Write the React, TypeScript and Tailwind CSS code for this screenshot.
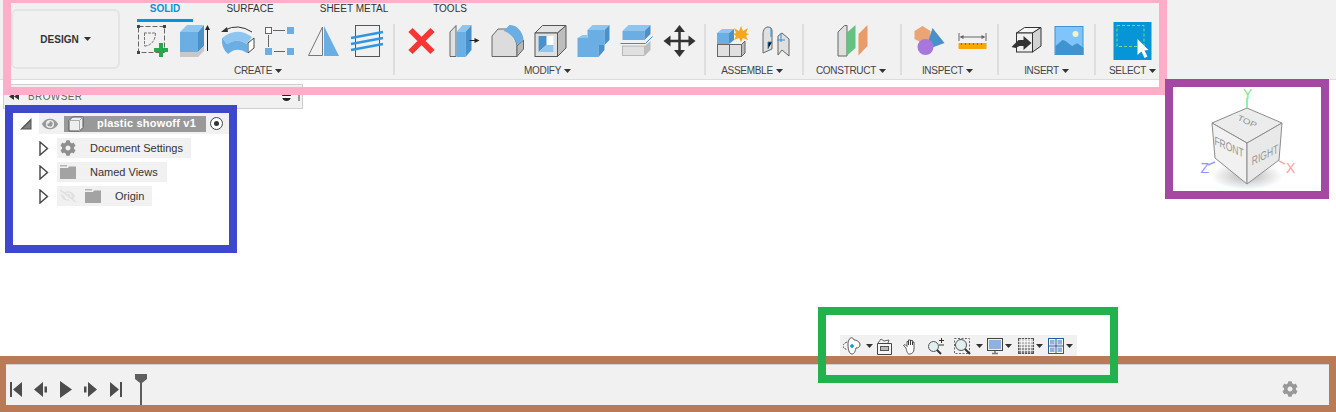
import type { ReactNode } from 'react'
import { FaCog, FaEye, FaEyeSlash } from 'react-icons/fa'

const BLUE = '#6aaee3'
const BLUE_DARK = '#4a91c9'
const BLUE_LIGHT = '#8fc6ef'

// toolbar icons are drawn in screen coords, x is the left edge of the 43px cell
function Cell({ x, children }: { x: number; children: ReactNode }) {
  return (
    <svg width={43} height={40} viewBox={`${x} 21 43 40`} className="shrink-0">
      {children}
    </svg>
  )
}

function Caret({ className = '' }: { className?: string }) {
  return (
    <svg width={7} height={4} viewBox="0 0 7 4" className={className}>
      <polygon points="0,0 7,0 3.5,4" fill="#333" />
    </svg>
  )
}

function Group({ label, className, labelClass = 'mr-[4px]', children }: { label: string; className: string; labelClass?: string; children: ReactNode }) {
  return (
    <div className={`flex flex-col items-center h-[51px] ${className}`}>
      <div className="flex h-[40px] -mt-[3px]">{children}</div>
      <div className={`flex items-center gap-[3px] mt-[4px] text-[10px] tracking-[-0.3px] leading-[12px] text-[#444] ${labelClass}`}>
        {label}
        <Caret />
      </div>
    </div>
  )
}

function Folder() {
  return (
    <svg width={16} height={14} viewBox="0 0 16 14">
      <path d="M0 0h7v1.500H0z" fill="#b5b5b5" />
      <path d="M0 3h8l1-1.500h7V14H0z" fill="#a3a3a3" />
    </svg>
  )
}

function Expand() {
  return (
    <svg width={10} height={15} viewBox="0 0 10 15" className="shrink-0">
      <path d="M1 1l7.500 6.500L1 14z" fill="#fff" stroke="#444" strokeWidth="1.400" />
    </svg>
  )
}

function Toolbar() {
  return (
    <div className="flex h-[80px] shrink-0 bg-[#f1f1f1] border-b border-[#dcdcdc]">
      <div className="w-[109px] h-[60px] mt-[9px] ml-[11px] mr-[7px] shrink-0 flex items-center justify-center gap-[5px] rounded-[6px] border-2 border-[#e4e4e4] text-[10px] font-bold text-[#333]">
        DESIGN
        <Caret />
      </div>
      <div className="flex flex-col">
        <div className="flex h-[24px] text-[10px] text-[#333]">
          <div className="w-[56px] ml-[10px] h-[22px] flex justify-center pt-[3px] border-b-[3px] border-[#0696d7] text-[#0696d7] font-bold leading-[12px]">SOLID</div>
          <div className="w-[114px] flex justify-center pt-[3px] leading-[12px]">SURFACE</div>
          <div className="w-[94px] flex justify-center pt-[3px] leading-[12px]">SHEET METAL</div>
          <div className="w-[98px] flex justify-center pt-[3px] leading-[12px]">TOOLS</div>
        </div>
        <div className="flex">
          <Group label="CREATE" className="w-[268px] border-r-2 border-[#dedede]">
            <Cell x={131}>
              <rect x="138.500" y="26.500" width="26" height="26" fill="none" stroke="#666" strokeDasharray="5 2" />
              <path d="M137 25h3v3h-3zM163 25h3v3h-3zM137 51h3v3h-3z" fill="#444" />
              <path d="M144 33h11M144.500 33v13M144.500 46c6 0 11-5 11-13" fill="none" stroke="#777" strokeDasharray="3 1" />
              <path d="M159 43h4v5h5v4h-5v5h-4v-5h-5v-4h5z" fill="#22a94a" />
            </Cell>
            <Cell x={174}>
              <polygon points="180,32 198,32 198,52 180,52" fill={BLUE} />
              <polygon points="198,32 204,25 204,46 198,52" fill={BLUE_DARK} />
              <polygon points="180,32 187,25 204,25 198,32" fill={BLUE_LIGHT} />
              <polygon points="180,52 198,52 204,46 204,51 198,57 180,57" fill="#c8c8c8" />
              <path d="M207.500 29v22" stroke="#222" />
              <polygon points="207.500,25 205,30 210,30" fill="#222" />
            </Cell>
            <Cell x={217}>
              <path d="M222 38Q237 26 252 37L247 44Q237 37 227 44Z" fill={BLUE_LIGHT} />
              <path d="M222 38L227 44Q237 37 247 44V53Q237 46 228 54Q221 48 222 38Z" fill={BLUE} />
              <polygon points="248,43 254,38 254,48 248,53" fill="#fff" stroke="#444" />
              <path d="M252 32Q238 23 225 30" fill="none" stroke="#333" />
              <polygon points="221,32 227,27 228,32" fill="#333" />
            </Cell>
            <Cell x={260}>
              <rect x="265.500" y="27.500" width="6" height="6" fill="#fff" stroke="#666" />
              <rect x="287" y="27" width="7" height="7" fill={BLUE} />
              <rect x="265" y="48" width="7" height="7" fill={BLUE} />
              <rect x="287" y="48" width="7" height="7" fill={BLUE} />
              <path d="M273 30.500h12M268.500 35v12M274 51.500h11" stroke="#666" />
            </Cell>
            <Cell x={303}>
              <polygon points="308.500,55.500 322.500,27 322.500,55.500" fill="none" stroke="#777" />
              <polygon points="324,26 339,56 324,56" fill={BLUE} />
            </Cell>
            <Cell x={346}>
              <rect x="355.500" y="25.500" width="24" height="31" fill="#f1f1f1" stroke="#555" />
              <path d="M351 38l32-6M351 44l32-6M351 50l32-6" stroke="#2f96e0" strokeWidth="2.500" />
            </Cell>
          </Group>
          <Group label="MODIFY" labelClass="mr-[6px]" className="w-[311px] pl-[2px] border-r-2 border-[#dedede]">
            <Cell x={399.500}>
              <path d="M410 30l22 22M432 30l-22 22" stroke="#f93535" strokeWidth="6" />
            </Cell>
            <Cell x={442.500}>
              <path d="M449.500 56.500V32l6-6.500v31z" fill="#e0e0e0" stroke="#666" />
              <rect x="456" y="32" width="9" height="25" fill={BLUE} />
              <polygon points="456,32 462,25 471,25 465,32" fill={BLUE_LIGHT} />
              <polygon points="465,32 471,25 471,50 465,57" fill={BLUE_DARK} />
              <path d="M469 40.500h6" stroke="#222" />
              <polygon points="479,40.500 474,38 474,43" fill="#222" />
            </Cell>
            <Cell x={485.500}>
              <path d="M491.500 56.500V36l6-7h9c5 4 9 10 10 17v10.500z" fill="#dcdcdc" stroke="#666" />
              <path d="M516.500 46l6.500-6v9l-6.500 7.500z" fill="#b8b8b8" stroke="#666" />
              <path d="M503 31l6-6c7 0 13 6 14 14l-6 6c-2-6-7-12-14-14z" fill={BLUE} />
            </Cell>
            <Cell x={528.500}>
              <polygon points="534.500,33 542,25.500 565.500,25.500 557,33" fill="#e4e4e4" stroke="#555" />
              <polygon points="557,33 565.500,25.500 565.500,48 557,56.500" fill="#bdbdbd" stroke="#555" />
              <rect x="534.500" y="33" width="22.500" height="23.500" fill="#e0e0e0" stroke="#555" />
              <rect x="538" y="36" width="15" height="16" fill="#fff" />
              <polygon points="538,36 546,36 546,45 538,52" fill={BLUE_DARK} />
              <polygon points="546,45 553,45 553,52 538,52" fill={BLUE_LIGHT} />
            </Cell>
            <Cell x={571.500}>
              <polygon points="577,38 587,38 587,30 604,30 604,45 598,45 598,57 577,57" fill={BLUE} />
              <polygon points="587,30 592,25 609,25 604,30" fill={BLUE_LIGHT} />
              <polygon points="577,38 582,35 587,35 587,38" fill={BLUE_LIGHT} />
              <polygon points="604,30 609,25 609,40 604,45" fill={BLUE_DARK} />
              <polygon points="598,45 604,45 604,50 598,57" fill={BLUE_DARK} />
            </Cell>
            <Cell x={614.500}>
              <rect x="622" y="31" width="22" height="9" fill={BLUE} />
              <polygon points="622,31 628,25 650,25 644,31" fill={BLUE_LIGHT} />
              <polygon points="644,31 650,25 650,34 644,40" fill={BLUE_DARK} />
              <path d="M620 43.500h25l7-7" fill="none" stroke="#2f8fd8" />
              <rect x="622" y="46" width="22" height="9.500" fill="#e0e0e0" stroke="#888" strokeWidth=".5" />
              <polygon points="644,46 650,41 650,50 644,56" fill="#bdbdbd" />
            </Cell>
            <Cell x={657.500}>
              <path d="M679 30v22M668 41h22" stroke="#333" strokeWidth="2.500" />
              <polygon points="679,25 673.500,32 684.500,32" fill="#333" />
              <polygon points="679,57 673.500,50 684.500,50" fill="#333" />
              <polygon points="663,41 670,35.500 670,46.500" fill="#333" />
              <polygon points="695,41 688,35.500 688,46.500" fill="#333" />
            </Cell>
          </Group>
          <Group label="ASSEMBLE" className="w-[98px] px-[5px] border-r-2 border-[#dedede]">
            <Cell x={711}>
              <rect x="717" y="33" width="12" height="11" fill={BLUE} />
              <polygon points="717,33 722,29 734,29 729,33" fill={BLUE_LIGHT} />
              <polygon points="729,33 734,29 734,40 729,44" fill={BLUE_DARK} />
              <rect x="717.500" y="44.500" width="12" height="12" fill="#e0e0e0" stroke="#666" />
              <rect x="729.500" y="44.500" width="12" height="12" fill="#e0e0e0" stroke="#666" />
              <polygon points="741.500,44.500 745,41 745,53 741.500,56.500" fill="#bbb" stroke="#666" />
              <polygon points="741,26 743,31 748,28 746,33 749,34 746,36 748,40 743,38 741,42 739,38 734,40 736,36 733,34 736,33 734,28 739,31" fill="#f6a81c" />
            </Cell>
            <Cell x={754}>
              <path d="M763 53V34c0-4 2-7 5-7s4 2 4 4v18z" fill="#e0e0e0" stroke="#666" />
              <path d="M778 55V36l4-3 7 6v17l-7-6z" fill="#e0e0e0" stroke="#666" />
              <path d="M771 28v9M772 42h-4v7M781 33v9M777 40h8" stroke="#2f8fd8" />
            </Cell>
          </Group>
          <Group label="CONSTRUCT" labelClass="mr-[2px]" className="w-[98px] border-r-2 border-[#dedede]">
            <Cell x={830.500}>
              <polygon points="837.500,32 844,25.500 846.500,25.500 846.500,56 837.500,56" fill="#e0e0e0" stroke="#666" />
              <polygon points="846,33 855,25 855,48 846,56" fill="#63c27f" />
              <polygon points="858,34 867,25 867,46 858,55.500" fill="#e89c69" />
            </Cell>
          </Group>
          <Group label="INSPECT" labelClass="mr-[6px]" className="w-[97px] pl-[2px] border-r-2 border-[#dedede]">
            <Cell x={907.500}>
              <polygon points="922,26 930,31 930,39 922,43 914,39 914,31" fill="#eba476" />
              <polygon points="932,28 944,43 925,50" fill={BLUE_DARK} />
              <circle cx="925" cy="47" r="8" fill="#a877de" />
            </Cell>
            <Cell x={950.500}>
              <path d="M958.500 33v8M985.500 33v8M961 37h22" stroke="#666" />
              <polygon points="959,37 963,35 963,39" fill="#666" />
              <polygon points="985,37 981,35 981,39" fill="#666" />
              <rect x="958" y="43" width="28" height="6" fill="#f6a800" />
              <path d="M961 43v2M965 43v2M969 43v2M973 43v2M977 43v2M981 43v2" stroke="#9a6a00" />
            </Cell>
          </Group>
          <Group label="INSERT" labelClass="mr-[2px]" className="w-[97px] pl-[2px] border-r-2 border-[#dedede]">
            <Cell x={1004.500}>
              <polygon points="1016,33 1024,27.500 1040.500,27.500 1032,33" fill="#f6f6f6" stroke="#333" />
              <polygon points="1032,33 1040.500,27.500 1040.500,46 1032,52" fill="#d4d4d4" stroke="#333" />
              <rect x="1016" y="33" width="16" height="19" fill="#f0f0f0" stroke="#333" />
              <polygon points="1011,47 1018,40 1023,40 1023,36 1031,43 1023,50 1023,46 1019,46 1015,48" fill="#333" />
            </Cell>
            <Cell x={1047.500}>
              <rect x="1054.500" y="26.500" width="28" height="28" fill="#80c4fb" stroke="#3f93cf" />
              <path d="M1055 46l7-6c3 0 6 4 10 6 3-2 4-3 6-2l5 4v7h-28z" fill="#3f93cf" />
              <circle cx="1075" cy="34" r="3" fill="#f7f3c8" />
            </Cell>
          </Group>
          <Group label="SELECT" labelClass="" className="w-[73px]">
            <Cell x={1111.500}>
              <rect x="1114" y="22" width="38" height="38" fill="#0696d7" />
              <rect x="1117.500" y="25.500" width="27" height="21" fill="none" stroke="#6ee07f" strokeDasharray="3 2" />
              <polygon points="1138,39 1138,55 1142,51.500 1145,58 1148,56.500 1145,50.500 1149,50" fill="#fff" />
            </Cell>
          </Group>
        </div>
      </div>
    </div>
  )
}

function BrowserTree() {
  return (
    <div className="absolute left-0 top-0 w-[304px] text-[11px] text-[#333]">
      <div className="ml-[3px] mt-[4px] w-[300px] h-[25px] flex items-center border border-[#cfcfcf] bg-[#f1f1f1] text-[#666] text-[10px]">
        <svg width={10} height={7} viewBox="0 0 10 7" className="ml-[5px]">
          <path d="M5 0v7L0 3.500zM10 0v7L5 3.500z" fill="#333" />
        </svg>
        <span className="ml-[9px] tracking-[0.4px]">BROWSER</span>
        <div className="ml-auto mr-[7px] w-[9px] h-[9px] rounded-full bg-[#222] flex items-center">
          <div className="w-full h-[2px] bg-white" />
        </div>
        <div className="mr-[2px] w-[2px] h-[9px] border-x border-[#999]" />
      </div>
      <div className="flex items-center ml-[20px] mt-[4px] h-[21px]">
        <svg width={12} height={12} viewBox="0 0 12 12" className="shrink-0">
          <path d="M0 11.500L11.500 0v11.500z" fill="#555" />
          <path d="M3 10.500l7.500-7.500v7.500z" fill="#fff" opacity=".25" />
        </svg>
        <div className="ml-[7px] w-[190px] h-full flex items-center bg-[#f1f1f1]">
          <FaEye className="ml-[3px] text-[#999] w-[16px] h-[16px]" />
          <div className="ml-[6px] w-[142px] h-[16px] flex items-center bg-[#999] text-white font-bold">
            <svg width={16} height={16} viewBox="0 0 16 16" className="ml-[4px] shrink-0">
              <path d="M1 4.500L4.500 1H15v10.500L11.500 15H1z" fill="#eee" stroke="#555" />
              <path d="M1 4.500h10.500V15M11.500 4.500L15 1" fill="none" stroke="#aaa" />
            </svg>
            <span className="ml-[13px] tracking-[0.2px] whitespace-nowrap">plastic showoff v1</span>
          </div>
          <div className="ml-[4px] w-[13px] h-[13px] rounded-full border border-[#444] bg-white flex items-center justify-center">
            <div className="w-[5px] h-[5px] rounded-full bg-[#333]" />
          </div>
        </div>
      </div>
      <div className="flex flex-col gap-[4px] mt-[4px] ml-[39px]">
        <div className="flex items-center gap-[8px] h-[20px]">
          <Expand />
          <div className="w-[134px] h-full flex items-center bg-[#f1f1f1]">
            <FaCog className="ml-[3px] w-[16px] h-[16px] text-[#8f8f8f]" />
            <span className="ml-[14px] whitespace-nowrap">Document Settings</span>
          </div>
        </div>
        <div className="flex items-center gap-[8px] h-[20px]">
          <Expand />
          <div className="w-[110px] h-full flex items-center bg-[#f1f1f1] pl-[3px]">
            <Folder />
            <span className="ml-[14px] whitespace-nowrap">Named Views</span>
          </div>
        </div>
        <div className="flex items-center gap-[8px] h-[20px]">
          <Expand />
          <div className="w-[95px] h-full flex items-center bg-[#f1f1f1] pl-[3px]">
            <FaEyeSlash className="w-[16px] h-[16px] text-[#e0e0e0]" />
            <div className="ml-[9px]"><Folder /></div>
            <span className="ml-[14px]">Origin</span>
          </div>
        </div>
      </div>
    </div>
  )
}

function ViewCube() {
  return (
    <svg width={120} height={112} viewBox="1195 85 120 112" className="absolute left-[1195px] top-[5px]">
      <defs>
        <radialGradient id="cubeShadow">
          <stop offset="0%" stopColor="#000" stopOpacity=".28" />
          <stop offset="100%" stopColor="#000" stopOpacity="0" />
        </radialGradient>
      </defs>
      <ellipse cx="1247" cy="176" rx="36" ry="14" fill="url(#cubeShadow)" />
      <polygon points="1247,108 1282,123 1247,143 1212,123" fill="#ececec" stroke="#8c8c8c" />
      <polygon points="1212,123 1247,143 1247,184 1215,158" fill="#f1f1f1" stroke="#8c8c8c" />
      <polygon points="1282,123 1247,143 1247,184 1279,160" fill="#e9e9e9" stroke="#8c8c8c" />
      <g fontFamily="Liberation Sans, Arial, sans-serif" fontSize="10" fill="#959595" textAnchor="middle">
        <text transform="translate(1246 124) rotate(24) scale(1 .8)">TOP</text>
        <text transform="translate(1229 151) skewY(24) scale(.85 1.2)">FRONT</text>
        <text transform="translate(1265 159) skewY(-26) scale(.85 1.2)">RIGHT</text>
      </g>
      <path d="M1247 98v10" stroke="#7be68c" strokeWidth="1.500" />
      <path d="M1215 162l-7 3" stroke="#9aa0ff" strokeWidth="1.500" />
      <path d="M1279 161l6 3" stroke="#ffa8a8" strokeWidth="1.500" />
      <g fontFamily="Liberation Sans, Arial, sans-serif" fontSize="14">
        <text x="1243" y="99" fill="#7be68c">Y</text>
        <text x="1200.500" y="173" fill="#8f95ff">Z</text>
        <text x="1286" y="173" fill="#ffa0a0">X</text>
      </g>
    </svg>
  )
}

function NavBar() {
  return (
    <div className="absolute left-[840px] top-[255px] w-[237px] h-[22px] flex items-center bg-[#f1f1f1]">
      <svg width={18} height={18} viewBox="0 0 18 18" className="ml-[3px]">
        <path d="M4 5C1.500 6 0 7.500 0 9s1.500 3 4 3.500" fill="none" stroke="#555" strokeDasharray="2 1" />
        <path d="M6 3c1-3 4-3 5 0 3 0 6 2 6 5 0 2-2 3-4 3-1 4-2 6-4 6-3 0-4-5-4-9 0-2 0-4 1-5z" fill="#fff" stroke="#555" />
        <path d="M7 9h4M9 7v4" stroke="#0696d7" strokeWidth="1.500" />
      </svg>
      <Caret className="ml-[5px]" />
      <svg width={17} height={17} viewBox="0 0 17 17" className="ml-[3px]">
        <path d="M1.500 5.500h14v11h-14z" fill="#f5f5f5" stroke="#444" />
        <path d="M2 5l3-4 3 2 5-1-1 3" fill="none" stroke="#666" />
        <rect x="4.500" y="8.500" width="8" height="4" fill="#bbb" stroke="#555" />
      </svg>
      <svg width={17} height={17} viewBox="0 0 17 17" className="ml-[9px]">
        <path d="M4 10L1.500 7.500 3 6.500l2 2V3.500h1.500V7 2h2v5-4.500h2V7 4h1.500v7c0 3-2 5-4 5H7c-1.500 0-2-2-3-6z" fill="#fff" stroke="#333" strokeWidth=".8" />
      </svg>
      <svg width={18} height={17} viewBox="0 0 18 17" className="ml-[8px]">
        <circle cx="6.500" cy="8.500" r="5" fill="#dff0ee" stroke="#555" />
        <path d="M10 12l4 4" stroke="#333" strokeWidth="2" />
        <path d="M12 2.500h5M14.500 0v5M12 7h5" stroke="#333" />
      </svg>
      <svg width={17} height={17} viewBox="0 0 17 17" className="ml-[9px]">
        <rect x=".5" y=".5" width="15" height="15" fill="none" stroke="#666" strokeDasharray="2 1.500" />
        <circle cx="7" cy="7" r="5.500" fill="#dff0ee" stroke="#555" />
        <path d="M11 11l5 5" stroke="#333" strokeWidth="2" />
      </svg>
      <Caret className="ml-[5px]" />
      <svg width={17} height={17} viewBox="0 0 17 17" className="ml-[4px]">
        <rect x=".5" y=".5" width="15" height="12" fill="#eee" stroke="#444" />
        <rect x="2" y="2" width="12" height="9" fill="#8fb1e0" />
        <path d="M5 15.500h6M8 13v3" stroke="#777" strokeWidth="1.500" />
      </svg>
      <Caret className="ml-[1px]" />
      <svg width={17} height={17} viewBox="0 0 17 17" className="ml-[6px]">
        <defs>
          <linearGradient id="gridFade" x1="0" y1="0" x2="0" y2="1">
            <stop offset="0%" stopColor="#ddd" />
            <stop offset="100%" stopColor="#777" />
          </linearGradient>
        </defs>
        <rect x=".5" y=".5" width="15" height="15" fill="url(#gridFade)" stroke="#555" />
        <path d="M3.500 0v16M6.500 0v16M9.500 0v16M12.500 0v16M0 3.500h16M0 6.500h16M0 9.500h16M0 12.500h16" stroke="#fff" strokeWidth=".7" />
      </svg>
      <Caret className="ml-[1px]" />
      <svg width={16} height={16} viewBox="0 0 16 16" className="ml-[5px]">
        <rect x=".5" y=".5" width="15" height="15" fill="#f5f5f5" stroke="#2f5a8f" />
        <path d="M8 0v16M0 8h16" stroke="#2f5a8f" />
        <path d="M2 2h4.500v4.500H2zM9.500 2H14v4.500H9.500zM2 9.500h4.500V14H2zM9.500 9.500H14V14H9.500z" fill="#8fb1e0" />
      </svg>
      <Caret className="ml-[2px]" />
    </div>
  )
}

function Timeline() {
  return (
    <div className="h-[48px] shrink-0 flex bg-[#f1f1f1] border-t border-[#cfcfcf]">
      <div className="flex items-start pl-[10px] h-full">
        <svg width={12} height={15} viewBox="0 0 12 15" className="mt-[17px]">
          <path d="M0 0h2v15H0zM12 0v15L3 7.500z" fill="#4d4d4d" />
        </svg>
        <svg width={13} height={15} viewBox="0 0 13 15" className="mt-[17px] ml-[12px]">
          <path d="M9 0v15L0 7.500zM10.500 4.500H13v6h-2.500z" fill="#4d4d4d" />
        </svg>
        <svg width={12} height={17} viewBox="0 0 12 17" className="mt-[16px] ml-[13px]">
          <path d="M0 0v17L12 8.500z" fill="#4d4d4d" />
        </svg>
        <svg width={13} height={15} viewBox="0 0 13 15" className="mt-[17px] ml-[12px]">
          <path d="M4 0v15L13 7.500zM0 4.500h2.500v6H0z" fill="#4d4d4d" />
        </svg>
        <svg width={12} height={15} viewBox="0 0 12 15" className="mt-[17px] ml-[13px]">
          <path d="M0 0v15L9 7.500zM10 0h2v15h-2z" fill="#4d4d4d" />
        </svg>
        <svg width={12} height={31} viewBox="0 0 12 31" className="mt-[9px] ml-[13px]">
          <path d="M0 0h12v5L7 9v22H5V9L0 5z" fill="#5e5e5e" />
        </svg>
      </div>
      <FaCog className="ml-auto mr-[38px] mt-[16px] w-[16px] h-[16px] text-[#999]" />
    </div>
  )
}

export default function App() {
  return (
    <div className="relative w-[1336px] h-[412px] overflow-hidden flex flex-col bg-white font-['Liberation_Sans',Arial,sans-serif]">
      <Toolbar />
      <div className="relative flex-1">
        <BrowserTree />
        <ViewCube />
        <NavBar />
      </div>
      <Timeline />

      {/* hand drawn highlight boxes over the screenshot */}
      <div className="absolute left-[3px] top-[-5px] w-[1164px] h-[100px] border-[8px] border-[#ffaec9]" />
      <div className="absolute left-[5px] top-[105px] w-[232px] h-[148px] border-[8px] border-[#3f48cc]" />
      <div className="absolute left-[1165px] top-[79px] w-[164px] h-[120px] border-[8px] border-[#a349a4]" />
      <div className="absolute left-[-2px] top-[356px] w-[1339px] h-[57px] border-[8px] border-[#b97a57]" />
      <div className="absolute left-[818px] top-[307px] w-[300px] h-[76px] border-[8px] border-[#22b14c]" />
    </div>
  )
}
